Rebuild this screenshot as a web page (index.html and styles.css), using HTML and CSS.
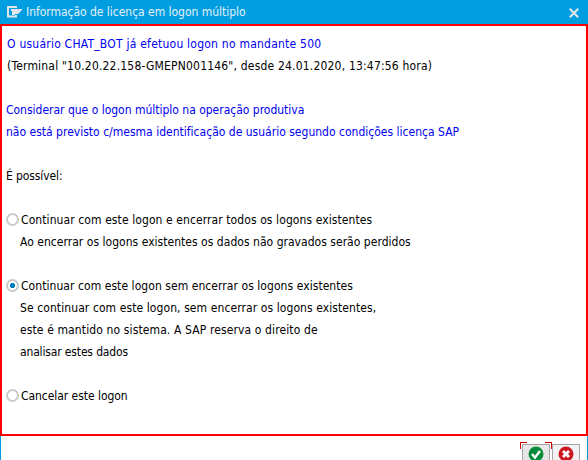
FILE: index.html
```
<!DOCTYPE html>
<html lang="pt">
<head>
<meta charset="utf-8">
<title>Informação de licença em logon múltiplo</title>
<link rel="stylesheet" href="styles.css">
</head>
<body>
<div class="dialog">
  <header class="titlebar">
    <svg class="logo" width="15" height="12" viewBox="0 0 15 12"><path d="M10 1H1v9.500h8V9" fill="none" stroke="#e0e6e9" stroke-width="2"/><path d="M4 3h11v1l-4 4H8v1H5V5H4z" fill="#e0e6e9"/></svg>
    <h1 class="title"><span class="t0">Informação de licença em logon múltiplo</span></h1>
    <svg class="close" width="10" height="10" viewBox="0 0 10 10"><path d="M.8.8l8.400 8.400M9.200.8L.8 9.200" stroke="#dfe6ea" stroke-width="2.200"/></svg>
  </header>
  <main class="content">
    <p class="row blue shift"><span class="t1">O usuário CHAT_BOT já efetuou logon no mandante 500</span></p>
    <p class="row shift"><span class="t2">(Terminal "10.20.22.158-GMEPN001146", desde 24.01.2020, 13:47:56 hora)</span></p>
    <p class="row"></p>
    <p class="row blue"><span class="t3">Considerar que o logon múltiplo na operação produtiva</span></p>
    <p class="row blue"><span class="t4">não está previsto c/mesma identificação de usuário segundo condições licença SAP</span></p>
    <p class="row"></p>
    <p class="row"><span class="t5">É possível:</span></p>
    <p class="row"></p>
    <label class="row"><i class="radio"></i><span class="t6">Continuar com este logon e encerrar todos os logons existentes</span></label>
    <p class="row note"><span class="t7">Ao encerrar os logons existentes os dados não gravados serão perdidos</span></p>
    <p class="row"></p>
    <label class="row"><i class="radio checked"></i><span class="t8">Continuar com este logon sem encerrar os logons existentes</span></label>
    <p class="row note"><span class="t9">Se continuar com este logon, sem encerrar os logons existentes,</span></p>
    <p class="row note"><span class="t10">este é mantido no sistema. A SAP reserva o direito de</span></p>
    <p class="row note"><span class="t11">analisar estes dados</span></p>
    <p class="row"></p>
    <label class="row"><i class="radio"></i><span class="t12">Cancelar este logon</span></label>
  </main>
  <footer class="actions">
    <button class="btn focused"><svg width="16" height="16" viewBox="0 0 16 16"><circle cx="8" cy="8" r="7.500" fill="#078b3b"/><path d="M4 8l3 3.500L12 5" fill="none" stroke="#fff" stroke-width="2.400"/></svg></button>
    <button class="btn"><svg width="16" height="16" viewBox="0 0 16 16"><circle cx="8" cy="8" r="7.500" fill="#cc1821"/><path d="M5 5l6 6M11 5l-6 6" stroke="#fff" stroke-width="2.800"/></svg></button>
  </footer>
</div>
</body>
</html>
```
FILE: styles.css
```
* { box-sizing: border-box; }
body { margin: 0; overflow: hidden; font: 12px/22px "DejaVu Sans Condensed", "DejaVu Sans", sans-serif; font-stretch: condensed; color: #000; background: #fff; }
.dialog { height: 460px; display: flex; flex-direction: column; overflow: hidden; }
.titlebar { height: 24px; flex: none; display: flex; align-items: center; padding: 0 9px 0 7px; background: #009de0; color: #e4f1f8; }
.logo { margin-right: 4px; }
.title { margin: 0; font-size: 12px; font-weight: 400; flex: 1; white-space: nowrap; }
.close { margin-top: 2px; }
.content { height: 412px; flex: none; border: 2px solid #f00; padding: 7px 4px; }
.row { display: flex; align-items: center; height: 22px; margin: 0; white-space: pre; }
.shift { padding-left: 1px; }
.blue { color: #0000f0; }
.note { padding-left: 14px; }
.radio { width: 13px; height: 13px; flex: none; margin: 0 2px 1px 0; border: 2px solid #c9c9c9; border-radius: 50%; background: #fff; }
.checked { background: radial-gradient(circle, #007cc0 2.300px, #fff 3px); }
.t0 { letter-spacing: -.03px; }
.t1 { letter-spacing: .23px; }
.t2 { letter-spacing: .19px; }
.t3 { letter-spacing: -.01px; }
.t4 { letter-spacing: .01px; }
.t5 { letter-spacing: -.1px; }
.t6 { letter-spacing: .09px; }
.t7 { letter-spacing: .03px; }
.t8 { letter-spacing: .06px; }
.t9 { letter-spacing: .09px; }
.t10 { letter-spacing: .12px; }
.t11 { letter-spacing: -.15px; }
.t12 { letter-spacing: -.05px; }
.actions { flex: 1; display: flex; gap: 2px; padding: 8px 7px 0 0; justify-content: flex-end; border-left: 1px solid #009de0; border-right: 1px solid #009de0; }
.btn { position: relative; width: 28px; height: 24px; flex: none; padding: 1px 1px 0 0; border: 1px solid #a5a5a5; background: #f2f2f2; display: flex; justify-content: center; }
.focused { background: #e6e6e6; }
.focused::before, .focused::after { content: ""; position: absolute; top: -3px; width: 6px; height: 6px; border-top: 1px solid #d00000; }
.focused::before { left: -3px; border-left: 1px solid #d00000; }
.focused::after { right: -3px; border-right: 1px solid #d00000; }
```
